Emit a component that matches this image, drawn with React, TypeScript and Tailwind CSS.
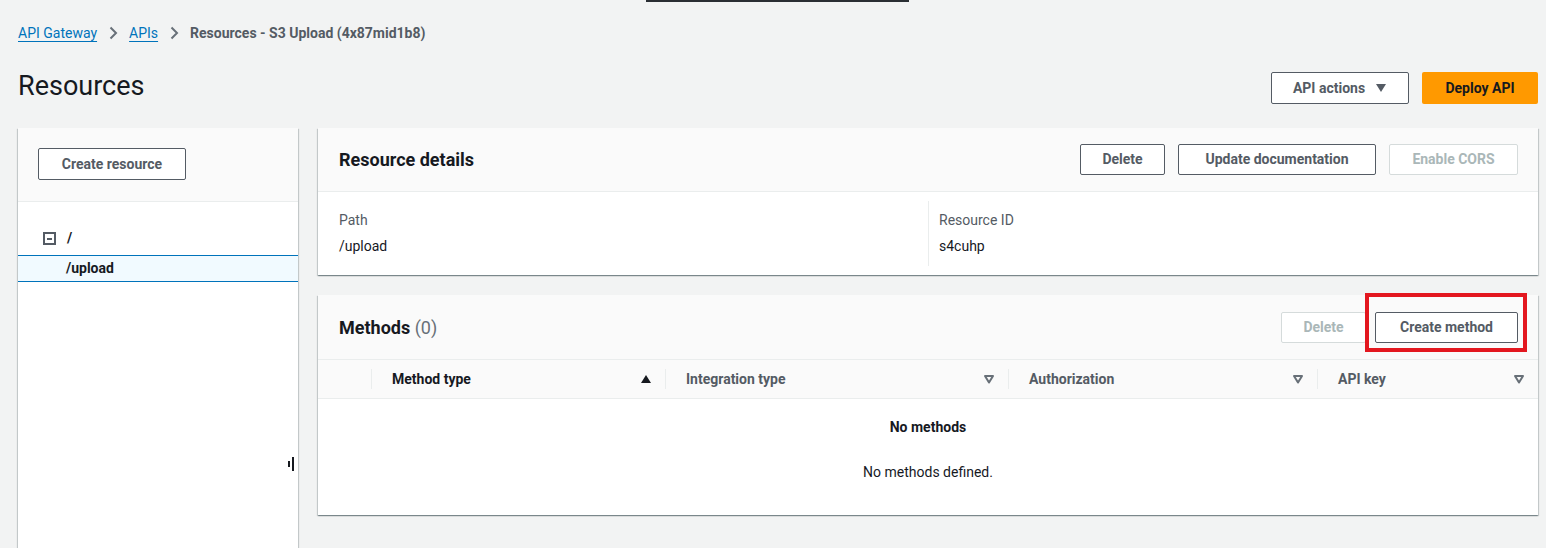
import React from 'react'

const font = { fontFamily: 'Roboto, "Noto Sans", sans-serif' }

function Btn({ children, disabled, w }: { children: React.ReactNode; disabled?: boolean; w: string }) {
  return (
    <button
      className={
        (disabled
          ? 'h-[31px] rounded-[2px] border border-[#d5dbdb] bg-white text-[14px] font-bold text-[#aab7b8] whitespace-nowrap '
          : 'h-[31px] rounded-[2px] border border-[#545b64] bg-white text-[14px] font-bold text-[#545b64] whitespace-nowrap ') + w
      }
    >
      {children}
    </button>
  )
}

function Chevron() {
  return (
    <svg width="16" height="16" viewBox="0 0 16 16" className="mx-[8px]">
      <path d="M5.5 2.5 11 8l-5.5 5.5" fill="none" stroke="#687078" strokeWidth="2" />
    </svg>
  )
}

function SortDown() {
  return (
    <svg width="12" height="10" viewBox="0 0 12 10">
      <path d="M2 2h8L6 8.5z" fill="none" stroke="#687078" strokeWidth="2" strokeLinejoin="round" />
    </svg>
  )
}

function SortUp() {
  return (
    <svg width="12" height="10" viewBox="0 0 12 10">
      <path d="M1 9h10L6 1z" fill="#16191f" />
    </svg>
  )
}

const cardShadow =
  'shadow-[0_1px_1px_0_rgba(0,28,36,0.3),1px_1px_1px_0_rgba(0,28,36,0.15),-1px_1px_1px_0_rgba(0,28,36,0.15)]'

export default function App() {
  const cols = [
    { label: 'Method type', icon: <SortUp />, dark: true },
    { label: 'Integration type', icon: <SortDown /> },
    { label: 'Authorization', icon: <SortDown /> },
    { label: 'API key', icon: <SortDown /> },
  ]

  return (
    <div style={font} className="relative h-[548px] w-[1546px] overflow-hidden bg-[#f2f3f3] pl-[18px] pr-[8px] text-[#16191f]">
      {/* strip peeking from top */}
      <div className="absolute left-[646px] top-0 h-[2px] w-[263px] bg-[#2a2e33]" />

      {/* breadcrumb */}
      <div className="flex h-[20px] items-center pt-[23px] box-content text-[14px]">
        <a className="text-[#0073bb] underline underline-offset-[3px]">API Gateway</a>
        <Chevron />
        <a className="text-[#0073bb] underline underline-offset-[3px]">APIs</a>
        <Chevron />
        <span className="font-bold text-[#545b64]">Resources - S3 Upload (4x87mid1b8)</span>
      </div>

      {/* page header */}
      <div className="mt-[29px] flex h-[32px] items-center justify-between">
        <h1 className="-mt-[5px] text-[27px] font-normal leading-[32px] text-[#16191f]">Resources</h1>
        <div className="flex gap-[13px]">
          <button className="flex h-[32px] w-[138px] items-center justify-center gap-[10px] rounded-[2px] border border-[#545b64] bg-white text-[14px] font-bold text-[#545b64]">
            API actions
            <svg width="12" height="10" viewBox="0 0 12 10">
              <path d="M1 1h10L6 9z" fill="#545b64" />
            </svg>
          </button>
          <button className="h-[32px] w-[116px] rounded-[2px] bg-[#ff9900] text-[14px] font-bold text-[#16191f]">Deploy API</button>
        </div>
      </div>

      {/* content */}
      <div className="mt-[24px] flex gap-[20px]">
        {/* left tree panel */}
        <div className={`relative h-[440px] w-[280px] shrink-0 bg-white ${cardShadow}`}>
          <div className="h-[74px] border-b border-[#eaeded] bg-[#fafafa] pl-[20px] pt-[20px]">
            <button className="h-[32px] w-[148px] rounded-[2px] border border-[#545b64] bg-white text-[14px] font-bold text-[#545b64]">
              Create resource
            </button>
          </div>
          <div className="pt-[24px]">
            <div className="flex h-[29px] items-center pb-[4px] pl-[25px] text-[14px] font-bold">
              <span className="mr-[11px] flex h-[13px] w-[13px] items-center justify-center border-2 border-[#545b64]">
                <span className="h-[2px] w-[5px] bg-[#545b64]" />
              </span>
              /
            </div>
            <div className="flex h-[27px] items-center border-y border-[#0073bb] bg-[#f1faff] pl-[48px] text-[14px] font-bold">
              /upload
            </div>
          </div>
          {/* resize handle */}
          <div className="absolute left-[270px] top-[329px] flex items-center gap-[2px]">
            <span className="h-[6px] w-[2px] bg-[#16191f]" />
            <span className="h-[14px] w-[2px] bg-[#16191f]" />
          </div>
        </div>

        {/* right column */}
        <div className="flex flex-1 flex-col gap-[20px]">
          {/* resource details */}
          <div className={`bg-white ${cardShadow}`}>
            <div className="flex h-[64px] items-center justify-between border-b border-[#eaeded] bg-[#fafafa] pl-[21px] pr-[20px]">
              <h2 className="text-[18px] font-bold">Resource details</h2>
              <div className="flex gap-[13px]">
                <Btn w="w-[85px]">Delete</Btn>
                <Btn w="w-[198px]">Update documentation</Btn>
                <Btn w="w-[129px]" disabled>Enable CORS</Btn>
              </div>
            </div>
            <div className="grid h-[83px] grid-cols-2 py-[9px] text-[14px]">
              <div className="pl-[21px] pt-[9px]">
                <div className="text-[#545b64]">Path</div>
                <div className="mt-[5px]">/upload</div>
              </div>
              <div className="border-l border-[#eaeded] pl-[10px] pt-[9px]">
                <div className="text-[#545b64]">Resource ID</div>
                <div className="mt-[5px]">s4cuhp</div>
              </div>
            </div>
          </div>

          {/* methods */}
          <div className={`relative h-[220px] bg-white ${cardShadow}`}>
            <div className="flex h-[64px] items-center justify-between bg-[#fafafa] pl-[21px] pr-[20px]">
              <h2 className="text-[18px] font-bold">
                Methods <span className="font-normal text-[#687078]">(0)</span>
              </h2>
              <div className="flex gap-[9px]">
                <Btn w="w-[85px]" disabled>Delete</Btn>
                <Btn w="w-[143px]">Create method</Btn>
              </div>
            </div>
            <div className="grid h-[40px] grid-cols-[53px_294px_343px_309px_1fr] border-y border-[#eaeded] bg-[#fafafa] text-[14px] font-bold">
              <div />
              {cols.map((c) => (
                <div key={c.label} className="flex items-center">
                  <span className="h-[20px] w-px bg-[#eaeded]" />
                  <span className={`ml-[20px] flex-1 ${c.dark ? 'text-[#16191f]' : 'text-[#545b64]'}`}>{c.label}</span>
                  <span className="mr-[13px] flex">{c.icon}</span>
                </div>
              ))}
            </div>
            <div className="flex flex-col items-center pt-[18px] text-[14px]">
              <div className="font-bold">No methods</div>
              <div className="mt-[24px]">No methods defined.</div>
            </div>

            {/* highlight box */}
            <div className="absolute left-[1047px] top-[-2px] h-[59px] w-[162px] border-[4px] border-[#e3171f]" />
          </div>
        </div>
      </div>
    </div>
  )
}
